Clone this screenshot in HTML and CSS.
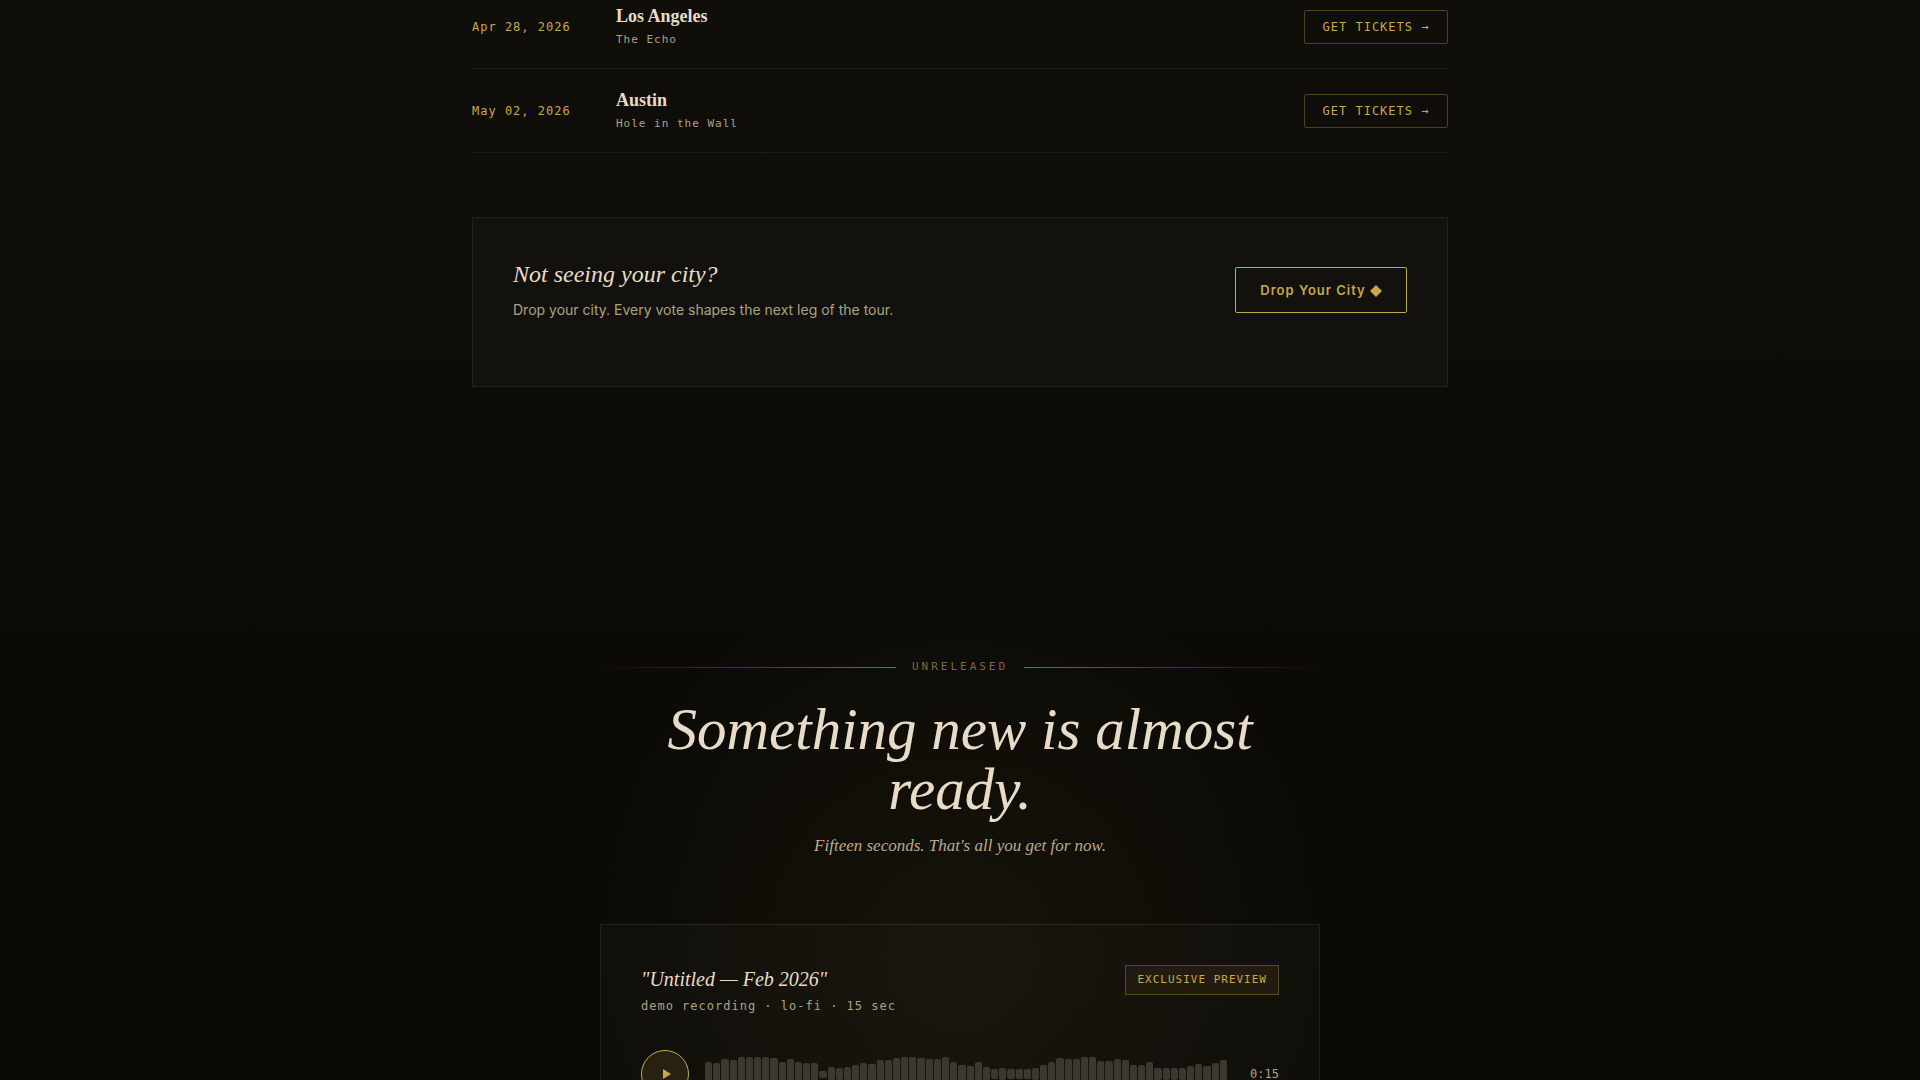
FILE: index.html
```html
<!DOCTYPE html>
<html lang="en">
<head>
<meta charset="utf-8">
<meta name="viewport" content="width=device-width, initial-scale=1">
<title>Tour and unreleased</title>
<link rel="stylesheet" href="styles.css">
</head>
<body>
<main class="page">
  <section class="tour">
    <ul class="dates">
      <li class="date-row">
        <time class="date" datetime="2026-04-28">Apr 28, 2026</time>
        <div class="place"><h3 class="city">Los Angeles</h3><p class="venue">The Echo</p></div>
        <a class="tickets" href="#">GET TICKETS →</a>
      </li>
      <li class="date-row">
        <time class="date" datetime="2026-05-02">May 02, 2026</time>
        <div class="place"><h3 class="city">Austin</h3><p class="venue">Hole in the Wall</p></div>
        <a class="tickets" href="#">GET TICKETS →</a>
      </li>
    </ul>
    <div class="vote">
      <div class="vote-text">
        <h3 class="vote-title">Not seeing your city?</h3>
        <p class="vote-copy">Drop your city. Every vote shapes the next leg of the tour.</p>
      </div>
      <button class="vote-button" type="button">Drop Your City <svg class="diamond" viewBox="0 0 12 12" aria-hidden="true"><path d="M6 0L12 6L6 12L0 6Z"/></svg></button>
    </div>
  </section>

  <section class="unreleased">
    <div class="inner">
      <p class="eyebrow">UNRELEASED</p>
      <h2 class="headline">Something new is almost ready.</h2>
      <p class="tagline">Fifteen seconds. That's all you get for now.</p>
      <article class="card">
        <header class="card-head">
          <div>
            <h3 class="track">"Untitled — Feb 2026"</h3>
            <p class="meta">demo recording · lo-fi · 15 sec</p>
          </div>
          <span class="badge">EXCLUSIVE PREVIEW</span>
        </header>
        <div class="player">
          <button class="play" type="button" aria-label="Play preview"><svg class="play-icon" viewBox="0 0 8 10" aria-hidden="true"><path d="M0 0L8 5L0 10Z"/></svg></button>
          <div class="wave">
            <i style="height:24px"></i><i style="height:23px"></i><i style="height:31px"></i><i style="height:29px"></i><i style="height:34px"></i><i style="height:34px"></i><i style="height:34px"></i><i style="height:34px"></i>
            <i style="height:33px"></i><i style="height:24px"></i><i style="height:30px"></i><i style="height:25px"></i><i style="height:22px"></i><i style="height:22px"></i><i style="height:7px"></i><i style="height:14px"></i>
            <i style="height:12px"></i><i style="height:14px"></i><i style="height:18px"></i><i style="height:22px"></i><i style="height:21px"></i><i style="height:28px"></i><i style="height:28px"></i><i style="height:32px"></i>
            <i style="height:34px"></i><i style="height:34px"></i><i style="height:32px"></i><i style="height:30px"></i><i style="height:30px"></i><i style="height:34px"></i><i style="height:24px"></i><i style="height:18px"></i>
            <i style="height:16px"></i><i style="height:24px"></i><i style="height:14px"></i><i style="height:10px"></i><i style="height:12px"></i><i style="height:10px"></i><i style="height:10px"></i><i style="height:10px"></i>
            <i style="height:12px"></i><i style="height:18px"></i><i style="height:24px"></i><i style="height:32px"></i><i style="height:30px"></i><i style="height:30px"></i><i style="height:34px"></i><i style="height:34px"></i>
            <i style="height:26px"></i><i style="height:26px"></i><i style="height:30px"></i><i style="height:28px"></i><i style="height:18px"></i><i style="height:18px"></i><i style="height:24px"></i><i style="height:12px"></i>
            <i style="height:12px"></i><i style="height:12px"></i><i style="height:12px"></i><i style="height:16px"></i><i style="height:20px"></i><i style="height:16px"></i><i style="height:22px"></i><i style="height:28px"></i>
          </div>
          <span class="length">0:15</span>
        </div>
      </article>
    </div>
  </section>
</main>
</body>
</html>
```
FILE: styles.css
```css
:root {
  --cream: #e8dcc8;
  --muted: #aea283;
  --gold: #c9a84c;
  --line: #1c1b16;
  --serif: "Liberation Serif", serif;
  --sans: Inter, sans-serif;
  --mono: "DejaVu Sans Mono", monospace;
}

* { box-sizing: border-box; margin: 0; padding: 0; }

body {
  background: #0b0a06;
  color: var(--cream);
  font-family: var(--sans);
}

.page { overflow: hidden; }

.tour {
  padding: 0 24px 128px;
  background: linear-gradient(#0f0e09, #0e0d09 50%, #0c0b07);
}

.dates {
  max-width: 976px;
  margin: -15px auto 64px;
  list-style: none;
}

.date-row {
  display: grid;
  grid-template-columns: 120px 1fr auto;
  column-gap: 24px;
  align-items: center;
  padding: 20px 0;
  border-bottom: 1px solid var(--line);
}

.date, .venue, .tickets, .eyebrow, .meta, .badge, .length { font-family: var(--mono); }

.date { color: var(--gold); font-size: 12px; line-height: 16px; letter-spacing: 1px; }

.place { display: grid; row-gap: 5px; }

.city { font: 700 18px/22px var(--serif); }

.venue { color: var(--muted); font-size: 11px; line-height: 16px; letter-spacing: 1px; }

.tickets {
  min-width: 144px;
  padding: 8px 16px;
  border: 1px solid #4c4221;
  border-radius: 2px;
  color: var(--gold);
  font-size: 12px;
  line-height: 16px;
  letter-spacing: 1px;
  text-align: center;
  text-decoration: none;
}

.vote {
  display: flex;
  justify-content: space-between;
  align-items: center;
  max-width: 976px;
  margin: 0 auto;
  padding: 40px 40px 64px;
  border: 1px solid #23221d;
  background: #12110d;
}

.vote-title { font: italic 400 24px/32px var(--serif); }

.vote-copy { margin-top: 8px; color: var(--muted); font-size: 14px; line-height: 24px; }

.vote-button {
  padding: 12px 24px;
  border: 1px solid var(--gold);
  border-radius: 2px;
  background: transparent;
  color: var(--gold);
  font: 600 13px/20px var(--sans);
  letter-spacing: 1px;
}

.diamond { width: 12px; height: 12px; fill: currentColor; vertical-align: -2px; }

.unreleased {
  padding: 144px 24px 128px;
  background:
    radial-gradient(circle 384px at 50% 440px, #17130a, transparent),
    linear-gradient(#0c0b07, #0a0905);
}

.inner { max-width: 720px; margin: 0 auto; text-align: center; }

.eyebrow {
  display: flex;
  align-items: center;
  gap: 16px;
  color: #80692c;
  font-size: 11px;
  line-height: 16px;
  letter-spacing: 3px;
}

.eyebrow::before, .eyebrow::after {
  content: "";
  flex: 1;
  height: 1px;
  background: linear-gradient(90deg, transparent, #80692c);
}

.eyebrow::after { background: linear-gradient(90deg, #80692c, transparent); }

.headline {
  max-width: 640px;
  margin: 24px auto 0;
  font: italic 400 59px/60px var(--serif);
}

.tagline { margin-top: 13px; color: #b9ab8d; font: italic 400 17px/28px var(--serif); }

.card {
  margin-top: 64px;
  padding: 40px;
  border: 1px solid rgba(255, 250, 230, 0.08);
  background: rgba(255, 250, 230, 0.02);
  text-align: left;
}

.card-head { display: flex; justify-content: space-between; align-items: flex-start; }

.track { font: italic 400 20px/28px var(--serif); }

.meta { margin-top: 2px; color: var(--muted); font-size: 12px; line-height: 22px; letter-spacing: 1px; }

.badge {
  padding: 6px 11px;
  border: 1px solid #574a23;
  background: #221c10;
  color: var(--gold);
  font-size: 11px;
  line-height: 16px;
  letter-spacing: 1px;
}

.player { display: flex; align-items: center; gap: 16px; margin-top: 33px; }

.play {
  display: grid;
  place-items: center;
  width: 48px;
  height: 48px;
  border: 1px solid var(--gold);
  border-radius: 50%;
  background: #282112;
  color: var(--gold);
}

.play-icon { width: 8px; height: 10px; margin-left: 3px; fill: currentColor; }

.wave { display: flex; flex: 1; align-items: center; gap: 1px; height: 48px; }

.wave i { flex: 1; border-radius: 2px; background: #3b3830; }

.length { min-width: 36px; color: var(--muted); font-size: 12px; line-height: 16px; text-align: right; }
```
